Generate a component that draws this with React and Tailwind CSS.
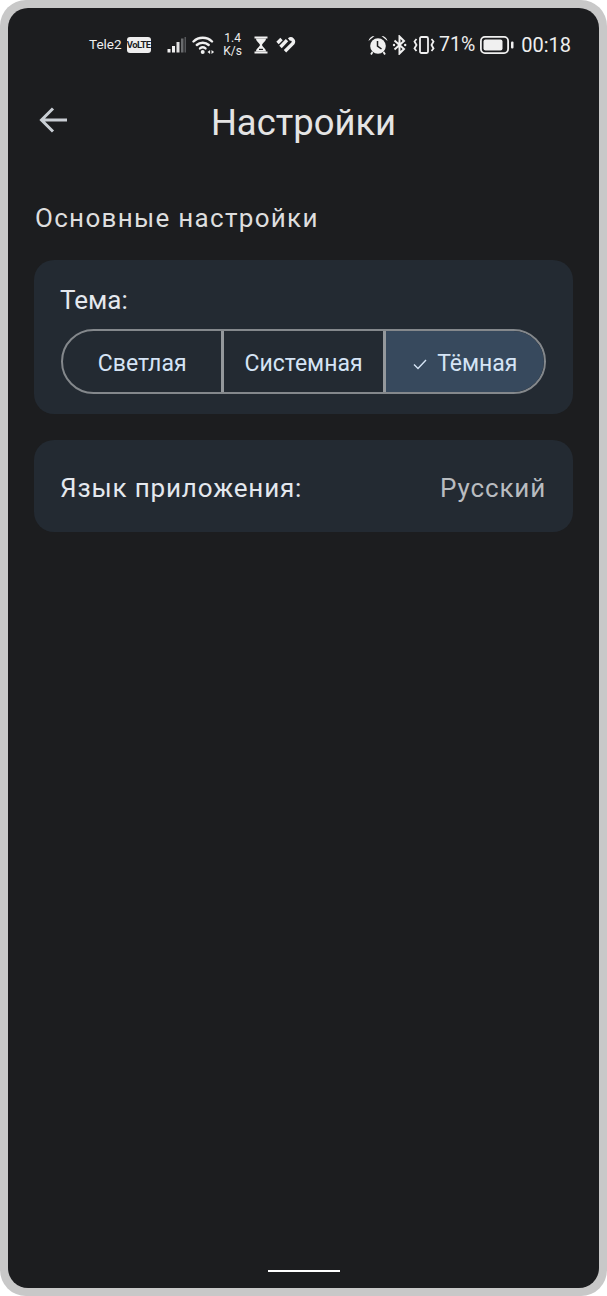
import React from 'react';

const font = { fontFamily: 'Roboto, "Noto Sans", sans-serif' };

function SignalIcon() {
  return (
    <svg width="20" height="18" viewBox="0 0 20 18" className="block">
      <rect x="0.5" y="13" width="3" height="3.5" fill="#f0f0f0" />
      <rect x="5" y="10" width="3" height="6.5" fill="#f0f0f0" />
      <rect x="9.5" y="6" width="3" height="10.5" fill="#e0e0e0" />
      <rect x="14" y="2.5" width="2.5" height="14" fill="#6a6c6e" />
      <rect x="17.5" y="1" width="1.5" height="15.5" fill="#55575a" />
    </svg>
  );
}

function WifiIcon() {
  return (
    <svg width="23" height="20" viewBox="0 0 23 20" fill="none" stroke="#f0f0f0" strokeWidth="2.4" strokeLinecap="round" className="block">
      <path d="M1.5 6.5C6.5 1.5 15 1.5 20 6.5" />
      <path d="M4.8 10C8 7 13.5 7 16.7 10" />
      <path d="M8 13.4C9.5 12.2 12 12.2 13.5 13.4" />
      <circle cx="10.7" cy="17" r="2" fill="#f0f0f0" stroke="none" />
      <path d="M15.5 17l2.6-2v4zM19.5 15l2.6 2-2.6 2z" fill="#f0f0f0" stroke="none" />
    </svg>
  );
}

function HourglassIcon() {
  return (
    <svg width="14" height="18" viewBox="0 0 14 18" className="block">
      <path d="M0.5 0.5h13v2h-13zM0.5 15.5h13v2h-13z" fill="#f0f0f0" />
      <path d="M2 2.5h10c0 2.8-3.4 4.6-4 6.5.6 1.9 4 3.7 4 6.5H2c0-2.8 3.4-4.6 4-6.5C5.4 7.1 2 5.3 2 2.5z" fill="#f0f0f0" />
      <path d="M5 12.8h4v1.2H5z" fill="#1c1d1f" />
    </svg>
  );
}

function HeartIcon() {
  return (
    <svg width="20" height="16" viewBox="0 0 20 16" fill="none" stroke="#f0f0f0" strokeWidth="3.4" className="block">
      <path d="M1.5 6L5.5 2" />
      <path d="M4.5 10L11 3.2" />
      <path d="M9 14.2L16.8 6.5C18.8 3.5 15.5 .6 13 2.6" />
    </svg>
  );
}

function AlarmIcon() {
  return (
    <svg width="20" height="20" viewBox="0 0 20 20" className="block">
      <circle cx="10" cy="11" r="7.8" fill="#f0f0f0" />
      <path d="M9.5 6V11L13.5 14" fill="none" stroke="#1c1d1f" strokeWidth="1.5" />
      <path d="M0.5 6C1 3 3.5 1 6.5 1zM19.5 6C19 3 16.5 1 13.5 1z" fill="#f0f0f0" />
      <path d="M4.5 17L3 19.5M15.5 17L17 19.5" stroke="#f0f0f0" strokeWidth="1.8" />
    </svg>
  );
}

function BluetoothIcon() {
  return (
    <svg width="15" height="20" viewBox="0 0 15 20" fill="none" stroke="#f0f0f0" strokeWidth="2" className="block">
      <path d="M2.5 5.5L12 14L7.5 18.5V1.5L12 6L2.5 14.5" />
      <circle cx="2" cy="10" r="1.2" fill="#f0f0f0" stroke="none" />
      <circle cx="13.2" cy="10" r="1.2" fill="#f0f0f0" stroke="none" />
    </svg>
  );
}

function VibrateIcon() {
  return (
    <svg width="22" height="18" viewBox="0 0 22 18" fill="none" stroke="#f0f0f0" strokeWidth="1.8" className="block">
      <rect x="7" y="1" width="8" height="16" rx="1.5" />
      <path d="M3.5 3L1.5 5.5L3.5 9L1.5 12.5L3.5 15" />
      <path d="M18.5 3L20.5 5.5L18.5 9L20.5 12.5L18.5 15" />
    </svg>
  );
}

function BatteryIcon() {
  return (
    <svg width="34" height="18" viewBox="0 0 34 18" className="block">
      <rect x="0.9" y="0.9" width="27.2" height="16.2" rx="4" fill="none" stroke="#f0f0f0" strokeWidth="1.8" />
      <rect x="3.5" y="3.5" width="19" height="11" rx="2" fill="#f0f0f0" />
      <rect x="31" y="5.5" width="2.5" height="7" rx="1" fill="#f0f0f0" />
    </svg>
  );
}

function StatusBar() {
  return (
    <div className="flex h-[74px] items-center justify-between pl-[81px] pr-7 text-[#eeeeee]">
      <div className="flex items-center">
        <span className="text-[13.5px] leading-none">Tele2</span>
        <span className="ml-[5px] flex h-4 w-6 items-center justify-center rounded-[3px] bg-[#eeeeee] text-[9.5px] font-bold leading-none tracking-[-0.6px] text-[#1c1d1f]">VoLTE</span>
        <span className="ml-4"><SignalIcon /></span>
        <span className="ml-[5px]"><WifiIcon /></span>
        <span className="ml-[7px] flex w-[22px] flex-col items-center text-[12px] leading-[13px]">
          <span>1.4</span>
          <span>K/s</span>
        </span>
        <span className="ml-[10px]"><HourglassIcon /></span>
        <span className="ml-[8px]"><HeartIcon /></span>
      </div>
      <div className="flex items-center">
        <AlarmIcon />
        <span className="ml-1"><BluetoothIcon /></span>
        <span className="ml-[6px]"><VibrateIcon /></span>
        <span className="ml-1 text-[19.5px] leading-none">71%</span>
        <span className="ml-[5px]"><BatteryIcon /></span>
        <span className="ml-[7px] text-[20px] leading-none">00:18</span>
      </div>
    </div>
  );
}

function Segment({ label, active, first, last }) {
  return (
    <div
      className={
        'flex flex-1 items-center justify-center border-[#94989c] pt-1 text-[23px] leading-none text-[#d5e4f5] ' +
        (active ? 'bg-[#37495d] ' : '') +
        (first ? 'rounded-l-full ' : '') +
        (last ? 'rounded-r-full ' : 'border-r-[3px]')
      }
    >
      {active && (
        <svg width="16" height="16" viewBox="0 0 16 16" fill="none" stroke="#d5e4f5" strokeWidth="1.4" className="mr-[9px]">
          <path d="M2 8.5L6 12.5L14 4" />
        </svg>
      )}
      {label}
    </div>
  );
}

export default function App() {
  return (
    <div className="h-[1296px] w-[607px] overflow-hidden bg-white" style={font}>
      <div className="h-full rounded-[26px] bg-[#c8c8c8] p-2">
        <div className="flex h-full flex-col rounded-[20px] bg-[#1c1d1f]">
          <StatusBar />
          <header className="relative flex h-[82px] items-center justify-center">
            <svg width="30" height="30" viewBox="0 0 30 30" fill="none" stroke="#c9ced4" strokeWidth="3" className="absolute left-[31px] top-[23px]">
              <path d="M28 15H3M14 3.5L2.5 15L14 26.5" />
            </svg>
            <h1 className="text-[36.4px] font-normal leading-none text-[#e4e4e4]">Настройки</h1>
          </header>
          <h2 className="mt-[39px] pl-[27px] text-[26px] font-normal leading-[30px] tracking-[1.3px] text-[#dedede]">Основные настройки</h2>
          <div className="mt-[27px] flex flex-col gap-[26px] px-[26px]">
            <section className="h-[154px] rounded-[20px] bg-[#232a32] px-[26px] pt-[24px]">
              <p className="text-[26px] leading-[32px] text-[#e4e8ee]">Тема:</p>
              <div className="mx-px mt-[13px] flex h-[65px] overflow-hidden rounded-full border-2 border-[#84888c]">
                <Segment label="Светлая" first />
                <Segment label="Системная" />
                <Segment label="Тёмная" active last />
              </div>
            </section>
            <section className="flex h-[92px] items-center justify-between rounded-[20px] bg-[#232a32] pl-[26px] pr-[27px] pt-[4px]">
              <span className="text-[26px] tracking-[0.85px] text-[#e4e8ee]">Язык приложения:</span>
              <span className="text-[26px] tracking-[0.85px] text-[#b9bcc0]">Русский</span>
            </section>
          </div>
          <div className="mt-auto flex justify-center pb-4">
            <div className="h-[2px] w-[72px] bg-white" />
          </div>
        </div>
      </div>
    </div>
  );
}
